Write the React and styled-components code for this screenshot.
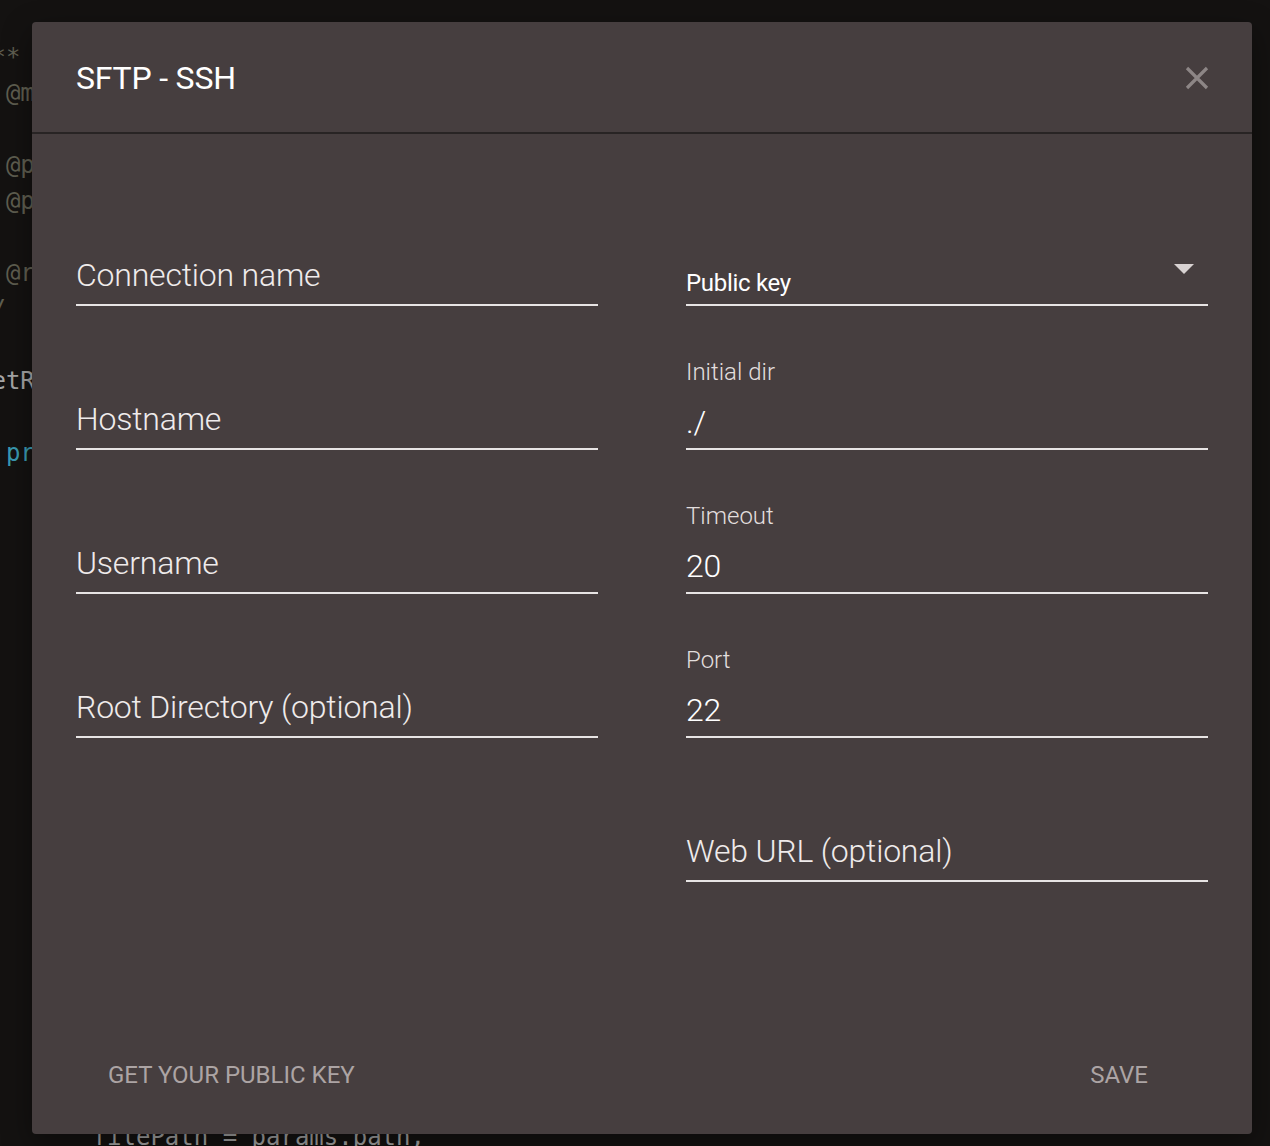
import React from 'react';
import styled, { createGlobalStyle } from 'styled-components';

const GlobalStyle = createGlobalStyle`
  html, body {
    margin: 0;
    padding: 0;
    background: #141211;
    overflow: hidden;
  }
`;

const Editor = styled.div`
  position: relative;
  width: 1270px;
  height: 1146px;
  overflow: hidden;
  background: #141211;
`;

const Code = styled.pre`
  margin: 39px 0 0 -23px;
  font-family: 'DejaVu Sans Mono', 'Liberation Mono', monospace;
  font-size: 24px;
  line-height: 36px;
  color: #a3a3a3;
`;

const Tok = styled.span`
  color: ${(p) =>
    p.kind === 'comment' ? '#5f5e50' : p.kind === 'key' ? '#3a9bb3' : '#a6a6a6'};
`;

const Overlay = styled.div`
  position: absolute;
  inset: 0;
  display: flex;
  align-items: flex-start;
  padding: 22px 0 0 32px;
`;

const Dialog = styled.div`
  width: 1220px;
  height: 1112px;
  background: #463e3f;
  border-radius: 4px;
  display: flex;
  flex-direction: column;
  font-family: Roboto, 'Noto Sans', sans-serif;
  box-shadow: 0 10px 30px rgba(0, 0, 0, 0.4);
`;

const Header = styled.div`
  height: 112px;
  box-sizing: border-box;
  border-bottom: 2px solid #282424;
  display: flex;
  align-items: center;
  justify-content: space-between;
  padding: 2px 43px 0 44px;
`;

const Title = styled.h2`
  margin: 0;
  font-size: 32px;
  font-weight: 400;
  color: #ffffff;
  letter-spacing: -0.2px;
`;

const Close = styled.button`
  border: 0;
  background: none;
  padding: 0;
  width: 24px;
  height: 24px;
  display: flex;
  cursor: pointer;
`;

const Body = styled.div`
  flex: 1;
  display: flex;
  gap: 88px;
  padding: 28px 44px 0;
`;

const Column = styled.div`
  width: 522px;
  display: flex;
  flex-direction: column;
`;

const Field = styled.div`
  height: 144px;
  box-sizing: border-box;
  display: flex;
  flex-direction: column;
  justify-content: flex-end;
  border-bottom: 2px solid #e8e4e4;
`;

const FloatLabel = styled.div`
  font-size: 24px;
  font-weight: 300;
  line-height: 30px;
  color: #e2dede;
  margin-bottom: 15px;
`;

const Value = styled.div`
  font-size: 32px;
  font-weight: 300;
  line-height: 40px;
  letter-spacing: -0.2px;
  padding-bottom: ${(p) => (p.placeholder ? '9px' : '6px')};
  color: ${(p) => (p.placeholder ? '#efebeb' : '#ffffff')};
`;

const SelectRow = styled.div`
  display: flex;
  justify-content: space-between;
  padding-bottom: 6px;
`;

const SelectText = styled.span`
  font-size: 24px;
  line-height: 30px;
  color: #ffffff;
  letter-spacing: -0.3px;
`;

const Arrow = styled.span`
  width: 0;
  height: 0;
  margin: -4px 14px 0 0;
  border-left: 10px solid transparent;
  border-right: 10px solid transparent;
  border-top: 10px solid #d8d2d2;
`;

const Footer = styled.div`
  height: 48px;
  margin-bottom: 35px;
  display: flex;
  justify-content: space-between;
  align-items: center;
  padding: 0 104px 0 76px;
`;

const FlatButton = styled.button`
  border: 0;
  background: none;
  padding: 0;
  font-family: Roboto, 'Noto Sans', sans-serif;
  font-size: 24px;
  font-weight: 400;
  text-transform: uppercase;
  color: #aca4a4;
  cursor: pointer;
`;

const codeLines = [
  [['comment', '/**']],
  [['comment', '  @method getRemoteFile']],
  [],
  [['comment', '  @param {Object} params']],
  [['comment', '  @param {Function} callback']],
  [],
  [['comment', '  @return {Promise}']],
  [['comment', '*/']],
  [],
  [['plain', 'getRemoteFile(params) {']],
  [],
  [['key', '  promise'], ['plain', ' = new Promise((resolve) => {']],
];

const fields = {
  left: [
    { placeholder: 'Connection name' },
    { placeholder: 'Hostname' },
    { placeholder: 'Username' },
    { placeholder: 'Root Directory (optional)' },
  ],
  right: [
    { label: 'Initial dir', value: './' },
    { label: 'Timeout', value: '20' },
    { label: 'Port', value: '22' },
    { placeholder: 'Web URL (optional)' },
  ],
};

function TextField({ label, value, placeholder }) {
  return (
    <Field>
      {label && <FloatLabel>{label}</FloatLabel>}
      <Value placeholder={placeholder ? 1 : 0}>{value || placeholder}</Value>
    </Field>
  );
}

export default function App() {
  const lines = [...codeLines];
  while (lines.length < 30) lines.push([]);
  lines.push([['plain', '        filePath = params.path,']]);

  return (
    <>
      <GlobalStyle />
      <Editor>
        <Code>
          {lines.map((line, i) => (
            <div key={i}>
              {line.length === 0
                ? ' '
                : line.map(([kind, text], j) => (
                    <Tok key={j} kind={kind}>
                      {text}
                    </Tok>
                  ))}
            </div>
          ))}
        </Code>
        <Overlay>
          <Dialog>
            <Header>
              <Title>SFTP - SSH</Title>
              <Close aria-label="close">
                <svg width="24" height="24" viewBox="0 0 24 24">
                  <path
                    d="M2 2 L22 22 M22 2 L2 22"
                    stroke="#8d8686"
                    strokeWidth="3.2"
                    fill="none"
                  />
                </svg>
              </Close>
            </Header>
            <Body>
              <Column>
                {fields.left.map((f, i) => (
                  <TextField key={i} {...f} />
                ))}
              </Column>
              <Column>
                <Field>
                  <SelectRow>
                    <SelectText>Public key</SelectText>
                    <Arrow />
                  </SelectRow>
                </Field>
                {fields.right.map((f, i) => (
                  <TextField key={i} {...f} />
                ))}
              </Column>
            </Body>
            <Footer>
              <FlatButton>Get your public key</FlatButton>
              <FlatButton>Save</FlatButton>
            </Footer>
          </Dialog>
        </Overlay>
      </Editor>
    </>
  );
}
